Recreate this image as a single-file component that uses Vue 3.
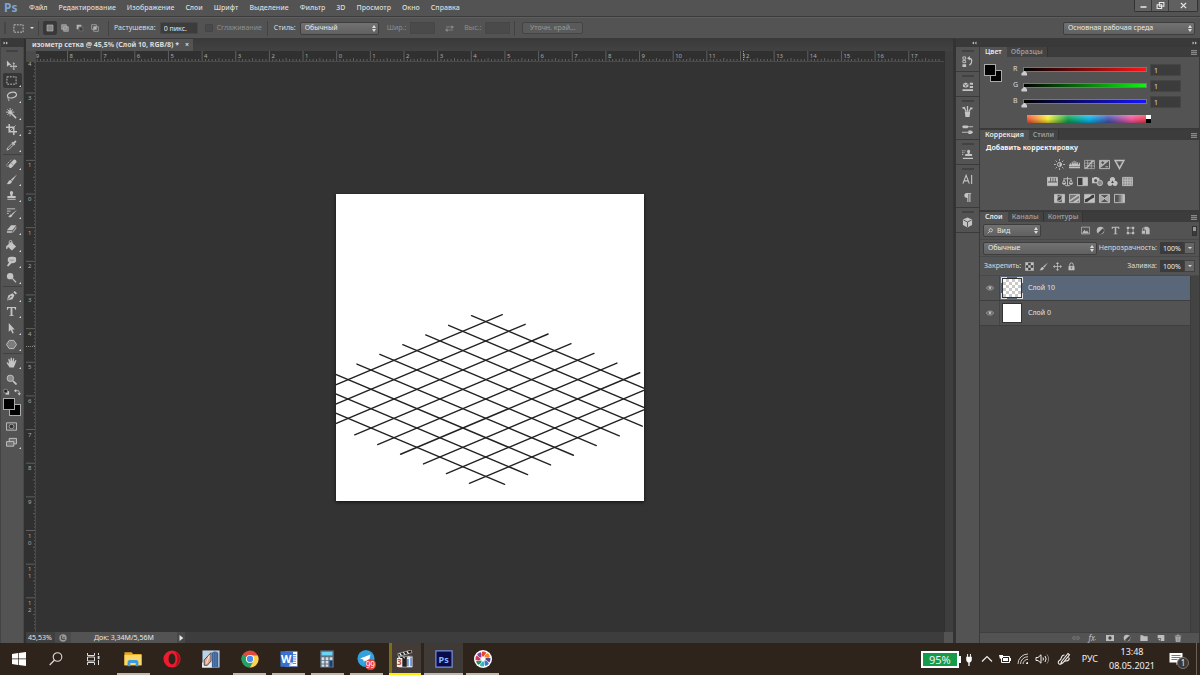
<script setup>
import { ref } from 'vue'

const menu = ['Файл', 'Редактирование', 'Изображение', 'Слои', 'Шрифт', 'Выделение', 'Фильтр', '3D', 'Просмотр', 'Окно', 'Справка']

const icons = {
  move: '<path d="M1 1.500v7l2-1.600h3z"/><path d="M8.500 4.500v7M5 8h7" stroke="currentColor"/><path d="M8.500 3.500l1.500 1.700H7zM8.500 12L7 10.500h3zM4.300 8L6 6.500v3zM12 8l-1.500-1.500v3z"/>',
  marquee: '<path d="M1 2h10v8H1z" fill="none" stroke="currentColor" stroke-dasharray="2 1.200"/>',
  lasso: '<ellipse cx="6.500" cy="4.500" rx="5" ry="3" transform="rotate(-12 6.500 4.500)" fill="none" stroke="currentColor" stroke-width="1.300"/><path d="M2.500 6.500c-2 1.500 1.500 2 .5 4.500" fill="none" stroke="currentColor"/>',
  wand: '<path d="M4.500 4.500l6.500 6.500" stroke="currentColor" stroke-width="1.700"/><path d="M4.500 0v3M4.500 6v3M0 4.500h3M6 4.500h3M1.500 1.500l2 2M7.500 1.500l-2 2M1.500 7.500l2-2" stroke="currentColor"/><circle cx="4.500" cy="4.500" r="2"/>',
  crop: '<path d="M3.500 0v8.500H12M0 3.500h8.500V12" fill="none" stroke="currentColor" stroke-width="1.600"/><path d="M3 9l7.500-7.500" stroke="currentColor" stroke-width=".8"/>',
  dropper: '<path d="M1 11l1-2.500 4.500-4.500 1.500 1.500L3.500 10z" fill="none" stroke="currentColor"/><path d="M6 3l1-1 .8.800L9.500 1c1-1 2.500.500 1.500 1.500L9.200 4.200l.8.800-1 1z"/>',
  heal: '<path d="M1.500 9.500a2.300 2.300 0 0 1 0-3.300l4.500-4.500" fill="none" stroke="currentColor" stroke-dasharray="1.400 1"/><path d="M3 7.500L8.200 2a2.200 2.200 0 0 1 3 3L6 10.500a2.200 2.200 0 0 1-3-3z"/><path d="M5.700 5.500l2 2" stroke="#535353" stroke-dasharray=".8 .6"/>',
  brush: '<path d="M12 .5L5.500 6l1.400 1.500z"/><path d="M5 6.500L6.500 8c0 2.500-3 3.500-6 3 2-.8 1.500-4 4.500-4.500z"/>',
  stamp: '<path d="M4.200 3a1.800 1.800 0 1 1 3.600 0c0 1.500-.8 1.500-.8 3.500h3.500v2.500h-9V6.500H5C5 4.500 4.200 4.500 4.200 3zM1.500 10h9v1h-9z"/>',
  history: '<path d="M12 3L6 7.500l1.200 1.300zM5.700 7.800L7 9c-.5 2-2.500 2.500-5 2 1.800-.8 1.500-2.700 3.700-3.200z"/><path d="M1 4.500h4M1 7h2M1 2h9" stroke="currentColor"/>',
  eraser: '<path d="M5.500 2.500h5.800L7 8H1z"/><path d="M1 8.600h6v2.400H1zM7.700 8.500l3.600-5v2.600L7.700 10.700z" opacity=".75"/>',
  bucket: '<path d="M5.500 2L11 7l-4.500 4.500L1 6.500z"/><path d="M3.500 5V2a1.500 1.500 0 0 1 3 0v3" fill="none" stroke="currentColor"/><path d="M1.500 5.500C-.5 7 0 10 .8 10s1.200-2 1.400-3z"/>',
  smudge: '<path d="M2 2.500C3.500.500 9 .5 11 2v4L9 7.500 6 8l-3.500 3.500C1 11.500 1 10 2 9l1.500-2.500L2 6z"/><path d="M4 4.500h5" stroke="#777" stroke-width=".7"/>',
  dodge: '<circle cx="4.500" cy="4.500" r="3.500"/><path d="M7 7l4 4.300" stroke="currentColor" stroke-width="1.400"/>',
  pen: '<path d="M1 11.500L2.500 6 7 3.500l2.200 2.200L7 10z"/><path d="M8 2.500L9.500 1 12 3.500 10.500 5z"/><path d="M1.500 11l3.500-3.500" stroke="#535353"/><circle cx="5.300" cy="7.200" r=".9" fill="#535353"/>',
  type: '<path d="M1 1h10v3h-1c-.2-1.300-.6-1.800-2-1.800H7V10l1.500.4V11h-5v-.6L5 10V2.200H4C2.600 2.200 2.200 2.700 2 4H1z"/>',
  arrow: '<path d="M3 0l6.500 7H6.800l1.700 3.800-1.500.7L5.300 7.700 3 9.500z"/>',
  shape: '<path d="M3.500 1.500h5L11.500 6l-3 4.500h-5L.5 6z" fill="#7c7c7c" stroke="currentColor"/>',
  hand: '<path d="M4 11.500L1 7c-.7-1.500.7-1.800 1.500-.8L3.500 7.500 2.500 2.700c0-1.200 1.200-1.200 1.500 0L4.800 5 5 1.200c.1-1 1.300-1 1.500 0L6.700 5l1-3.200c.4-1 1.500-.6 1.300.4L8.500 5.700l1.500-2c.7-.8 1.600-.1 1.200.8L9.500 9l-1 2.500z"/>',
  zoom: '<circle cx="4.700" cy="4.700" r="3.500" fill="#8b8b8b" stroke="currentColor"/><path d="M7.500 7.500l4 4" stroke="currentColor" stroke-width="1.800"/>',
  mask: '<path d="M.5 2h11v8H.5z" fill="none" stroke="currentColor"/><circle cx="6" cy="6" r="2.500" fill="#333" stroke="currentColor" stroke-width=".7"/>',
  screen: '<path d="M3.500 1.500h8v6h-8z" fill="#707070" stroke="currentColor"/><path d="M.5 5h8v5h-8z" fill="#707070" stroke="currentColor"/>',
  histpanel: '<path d="M1 1h3v2.500H1zM1 4.800h3v2.500H1z" fill="none" stroke="currentColor"/><path d="M.5 9h4v3h-4z"/><path d="M6.500 2.500h1.500c3.500 0 3.500 5.500 0 7.500" fill="none" stroke="currentColor" stroke-width="1.300"/><path d="M5.500 2.500L8.500 0v5z"/>',
  props: '<path d="M1 3.200L4 1.500l3 1.700V6L4 7.700 1 6z"/><path d="M4 4.500v3M1.500 3.500L4 4.700l2.500-1.200" stroke="#535353" stroke-width=".7" fill="none"/><path d="M8.500 2H12v2H8.500zM8.500 5.500H12v2H8.500zM.5 9H12v2H.5z"/>',
  brushes: '<path d="M3 6h6l-.8 6H3.800z"/><path d="M4.500 6L2 1M6 6V0M7.500 6L10 2" stroke="currentColor" stroke-width="1.400"/><path d="M.5 1h3v2h-3zM9 1.500h2.500v2H9z"/>',
  presets: '<path d="M0 3h12M0 9h12" stroke="currentColor"/><path d="M1 1.500h5l1 1.500-1 1.500H1zM7 7h3l2 2-2 2H7z"/>',
  clone: '<path d="M5.500 2.500a1.700 1.700 0 1 1 3.400 0c0 1.400-.7 1.400-.7 3H11v2.200H3.500V5.500h2.700c0-1.600-.7-1.600-.7-3zM1 9.500h11V11H1z"/><path d="M0 2h4M0 4h3M0 6h2" stroke="currentColor" stroke-dasharray="1 .7"/>',
  char: '<path d="M1 10.500L4.500 1.500 8 10.500M2.200 7.500h4.600M10.500 1v10" fill="none" stroke="currentColor" stroke-width="1.200"/>',
  para: '<path d="M5.500 1H10v1H9.200v9H8V2H7v9H5.800V6.500C1.500 6.500 1.500 1 5.500 1z"/>',
  cube: '<path d="M6 .5l5 2.300v6L6 11.500l-5-2.700v-6z"/><path d="M6 5.500V11M1.500 3.200L6 5.500l4.500-2.300" stroke="#535353" fill="none"/>',
  sun: '<circle cx="6" cy="6" r="2.300" fill="none" stroke="currentColor"/><path d="M6 3.700a2.300 2.300 0 0 1 0 4.600z"/><path d="M6 0v2M6 10v2M0 6h2M10 6h2M1.800 1.800l1.400 1.400M8.800 8.800l1.400 1.400M10.200 1.800L8.800 3.200M3.200 8.800l-1.400 1.400" stroke="currentColor"/>',
  levels: '<path d="M0 8.500h12V10H0zM0 8V6h1V4.500h1V6h1V3h1v2h1V2h1v3h1V2.500h1V5h1V3.500h1V6h1V4h1v4z"/>',
  curves: '<path d="M.5 1.500h11v9H.5zM4 1.500v9M8 1.500v9M.5 4.500h11M.5 7.500h11" fill="none" stroke="currentColor" stroke-width=".7"/><path d="M1 10c5 0 5-8 10-8" fill="none" stroke="currentColor" stroke-width="1.300"/>',
  expo: '<path d="M.5 1.500h11v9H.5z" fill="none" stroke="currentColor"/><path d="M1 2h10L1 10z" opacity=".85"/><path d="M2.500 4h3M4 2.500v3" stroke="#444"/><path d="M7 8.500h3" stroke="currentColor"/>',
  vib: '<path d="M1 1.500h10L6 10.500z" fill="#777" stroke="currentColor" stroke-width="1.400"/><path d="M4 3.500h4L6 7.500z" fill="#4a4a4a"/>',
  hue: '<path d="M.5 1.500h11v9H.5z" fill="none" stroke="currentColor"/><path d="M1 2h2.500v4H1zM4.500 2H6v4H4.500zM7 2h1.500v4H7zM9.500 2H11v4H9.500zM1 7h10v3H1z"/>',
  balance: '<path d="M6 1v9M1.500 3h9M3.500 10.500h5M.5 8l1.700-4L4 8M8 8l1.800-4L11.500 8" fill="none" stroke="currentColor"/><path d="M0 7.500h4.500L3.500 9.500h-2zM7.500 7.500H12l-1 2H8.500z"/>',
  bw: '<path d="M.5 1.500h11v9H.5z" fill="#3c3c3c" stroke="currentColor"/><path d="M6 2h5v8H6z"/>',
  photo: '<path d="M0 2h2l.5-1h3L6 2h2v6H0z"/><circle cx="4" cy="5" r="1.700" fill="#535353"/><circle cx="8.500" cy="7.500" r="3" fill="#888" stroke="currentColor"/>',
  mixer: '<circle cx="6" cy="3.800" r="2.800"/><circle cx="3.300" cy="8" r="2.800"/><circle cx="8.700" cy="8" r="2.800"/><path d="M6 5l1.500 2.500h-3z" fill="#444"/>',
  table: '<path d="M.5 1.500h11v9H.5z" fill="#8f8f8f"/><path d="M.5 1.500h11v9H.5zM3.500 1.500v9M6.200 1.500v9M8.900 1.500v9M.5 4.500h11M.5 7.500h11" fill="none" stroke="currentColor" stroke-width=".9"/>',
  invert: '<path d="M.5 1.500h11v9H.5z" fill="none" stroke="currentColor"/><path d="M1 2h3v8H1zM8.500 2H11v8H8.500z"/><path d="M3 9c0-5 3-6 6-6 0 4-2 6-6 6z" fill="#444" stroke="currentColor"/>',
  poster: '<path d="M.5 1.500h11v9H.5z" fill="#777" stroke="currentColor"/><path d="M1 7.500L9 2h2v.800L1 9.500zM4 10l7-4.500V8l-3 2z"/>',
  thresh: '<path d="M.5 1.500h11v9H.5z" fill="#3a3a3a" stroke="currentColor"/><path d="M1 2h8L6 4.500 1 7zM11 5v5H3l4-3z"/>',
  selcol: '<path d="M.5 1.500h11v9H.5z" fill="#555" stroke="currentColor"/><path d="M1 2l5 4-5 4zM11 2L6 6l5 4z" opacity=".75"/><path d="M1 2l10 8M11 2L1 10" stroke="currentColor"/>',
  gradmap: '<path d="M.5 1.500h11v9H.5z" fill="#555" stroke="currentColor"/><path d="M5 2h2v8H5z" fill="#777"/><path d="M7 2h2v8H7z" fill="#999"/><path d="M9 2h2v8H9z"/>',
  picture: '<path d="M.5 1.500h11v9H.5z" fill="none" stroke="currentColor"/><path d="M1.500 9.500L4.500 5l2 2.500L8 6l2.500 3.500z"/>',
  adjust: '<circle cx="6" cy="6" r="5"/><path d="M2.500 9.500A5 5 0 0 0 9.500 2.500z" fill="#484848"/>',
  frame: '<path d="M2.500 2.500h7v7h-7z" fill="none" stroke="currentColor"/><path d="M1 1h3v3H1zM8 1h3v3H8zM1 8h3v3H1zM8 8h3v3H8z"/>',
  smart: '<path d="M4.500 1H9l2.500 2.500V11h-7z"/><path d="M.5 5.500H6V11H.5z" stroke="#535353"/><path d="M2 5.500V4a1.300 1.300 0 0 1 2.600 0" fill="none" stroke="currentColor"/>',
  checker: '<path d="M.5.500h11v11H.5z" fill="#3c3c3c" stroke="currentColor"/><path d="M1 1h3.300v3.300H1zM7.600 1H11v3.300H7.600zM4.300 4.300h3.300v3.300H4.300zM1 7.600h3.300V11H1zM7.600 7.600H11V11H7.600z"/>',
  four: '<path d="M6 2v8M2 6h8" stroke="currentColor"/><path d="M6 0l2 2.500H4zM6 12l-2-2.500h4zM0 6l2.500-2v4zM12 6L9.500 4v4z"/>',
  lock: '<path d="M2 5.500h8V11H2z"/><path d="M3.700 5.500V3.500a2.300 2.300 0 0 1 4.600 0v2" fill="none" stroke="currentColor" stroke-width="1.300"/><circle cx="6" cy="8" r="1" fill="#535353"/>',
  eye: '<path d="M.5 6C3 2 9 2 11.500 6 9 10 3 10 .5 6z" fill="none" stroke="currentColor"/><circle cx="6" cy="5.800" r="2.200"/>',
  link: '<path d="M5 4H3a2 2 0 0 0 0 4h2M7 4h2a2 2 0 0 1 0 4H7M3.500 6h5" fill="none" stroke="#888"/>',
  addmask: '<path d="M0 1.500h12v9H0z"/><circle cx="6" cy="6" r="2.500" fill="#444"/>',
  folder: '<path d="M.5 2h4l1 1.500h6v7H.5z"/>',
  page: '<path d="M1 1.500h10v9H6V6.500H1z"/><path d="M1.500 7.500H5V11z"/>',
  trash: '<path d="M1 3h10M4.500 3V1.500h3V3" fill="none" stroke="currentColor"/><path d="M2 4h8l-.7 7.500H2.700z"/><path d="M4.500 5v5.500M6 5v5.500M7.500 5v5.500" stroke="#555" stroke-width=".6"/>',
  newsel: '<path d="M1.500 1.500h9v9h-9z" fill="#858585" stroke="currentColor"/>',
  addsel: '<path d="M1 1h7v7H1zM4 4h7v7H4z" fill="#8a8a8a" stroke="currentColor"/>',
  subsel: '<path d="M1 1h7v3H4v4H1z"/><path d="M4.500 4.500h6v6h-6z" fill="#404040" stroke="#777"/>',
  intsel: '<path d="M1 1h7v7H1zM4 4h7v7H4z" fill="none" stroke="currentColor"/><path d="M4 4h4v4H4z"/>',
  swap: '<path d="M1 4h8M3 8h8" stroke="currentColor"/><path d="M8.500 1.500L12 4 8.500 6.500zM3.500 5.500L0 8l3.500 2.500z"/>',
  bridge: '<circle cx="6" cy="6" r="5.500" fill="#999"/><path d="M4 2.500v5.500h5M6.500 5.500h2" fill="none" stroke="#3a3a3a" stroke-width="1.400"/>'
}

const toolGroups = [
  ['move', 'marquee', 'lasso', 'wand', 'crop', 'dropper'],
  ['heal', 'brush', 'stamp', 'history', 'eraser', 'bucket', 'smudge', 'dodge'],
  ['pen', 'type', 'arrow', 'shape'],
  ['hand', 'zoom']
]
const dock = [['histpanel'], ['props'], ['brushes', 'presets'], ['clone'], ['char', 'para'], ['cube']]
const adjustments = [
  ['sun', 'levels', 'curves', 'expo', 'vib'],
  ['hue', 'balance', 'bw', 'photo', 'mixer', 'table'],
  ['invert', 'poster', 'thresh', 'selcol', 'gradmap']
]

const UNIT = 33.65
const hMajor = Array.from({ length: 27 }, (_, i) => ({ pos: 300.7 + (i - 9) * UNIT, label: String(Math.abs(i - 9)) }))
const vMajor = Array.from({ length: 17 }, (_, i) => ({ pos: 132 + (i - 4) * UNIT, chars: String(Math.abs(i - 4)).split('') }))
const sub = [1, 2, 3, 4, 5, 6, 7, 8, 9]
const minorH = hMajor.map(m => sub.map(s => `M${(m.pos + s * UNIT / 10).toFixed(1)} 11v-${s === 5 ? 4 : 3}`).join('')).join('')
const minorV = vMajor.map(m => sub.map(s => `M11 ${(m.pos + s * UNIT / 10).toFixed(1)}h-${s === 5 ? 4 : 3}`).join('')).join('')

const gridLines = Array.from({ length: 9 }, (_, k) => {
  const dx = 23 * k
  const dy = 9.72 * k
  return [
    [135.5 - dx, 122 + dy, 352.7 - dx, 213.5 + dy],
    [-50.7 + dx, 212.5 + dy, 166.3 + dx, 121 + dy]
  ]
}).flat()

const channels = ref([
  { name: 'R', value: 1, color: '#ff1414' },
  { name: 'G', value: 1, color: '#0ff514' },
  { name: 'B', value: 1, color: '#1414ff' }
])
const layers = [
  { name: 'Слой 10', active: true },
  { name: 'Слой 0', active: false }
]
const petals = ['#e8452f', '#f08b27', '#5b3f98', '#3a78c2', '#39b0c8', '#2f8f5b', '#d8345a', '#8b3fa0']
</script>

<template>
  <div class="app">
    <header class="menubar">
      <span class="logo">Ps</span>
      <nav class="menu"><button v-for="m in menu" :key="m">{{ m }}</button></nav>
      <div class="wincontrols">
        <button aria-label="Свернуть"><svg viewBox="0 0 12 12"><path d="M2 7h8v2H2z" /></svg></button>
        <button aria-label="Окно"><svg viewBox="0 0 12 12"><path d="M4.500 2h6v5h-6zM1.500 5h6v5h-6z" fill="none" stroke="currentColor" stroke-width="1.500" /></svg></button>
        <button class="close" aria-label="Закрыть"><svg viewBox="0 0 12 12"><path d="M2.500 2.500l7 7M9.500 2.500l-7 7" stroke="currentColor" stroke-width="1.700" /></svg></button>
      </div>
    </header>

    <section class="options">
      <i class="grip-v"></i>
      <button class="preset" aria-label="Прямоугольная область">
        <svg class="ic12" viewBox="0 0 12 12" v-html="icons.marquee"></svg>
        <i class="caret"></i>
      </button>
      <i class="sep"></i>
      <div class="modes">
        <button v-for="(n, i) in ['newsel', 'addsel', 'subsel', 'intsel']" :key="n" :class="{ on: i === 0 }" :aria-label="n">
          <svg viewBox="0 0 12 12" v-html="icons[n]"></svg>
        </button>
      </div>
      <i class="sep"></i>
      <label class="field feather">Растушевка:<input type="text" value="0 пикс."></label>
      <label class="check dim"><input type="checkbox" disabled>Сглаживание</label>
      <i class="sep"></i>
      <label class="field">Стиль:<span class="sel style"><select><option>Обычный</option></select></span></label>
      <label class="field dim size">Шир.:<input type="text" disabled></label>
      <button class="swap dim" aria-label="Поменять"><svg viewBox="0 0 12 12" v-html="icons.swap"></svg></button>
      <label class="field dim size">Выс.:<input type="text" disabled></label>
      <i class="sep"></i>
      <button class="refine">Уточн. край...</button>
      <span class="sel workspace"><select aria-label="Рабочая среда"><option>Основная рабочая среда</option></select></span>
    </section>

    <main class="work">
      <aside class="tools">
        <div class="strip"><svg viewBox="0 0 12 8"><path d="M1 1l4 3-4 3zM6 1l4 3-4 3z" /></svg></div>
        <div class="toolbox">
          <i class="grip"></i>
          <div v-for="(g, gi) in toolGroups" :key="gi" class="tgroup" :class="'g' + gi">
            <button v-for="t in g" :key="t" :class="{ on: t === 'marquee', corner: t !== 'move' && t !== 'zoom' }" :aria-label="t">
              <svg viewBox="0 0 12 12" v-html="icons[t]"></svg>
            </button>
          </div>
          <div class="minis">
            <svg viewBox="0 0 8 8"><path d="M3 3h4v4H3z" fill="#ccc" /><path d="M1 1h4v4H1z" fill="#222" stroke="#aaa" stroke-width=".7" /></svg>
            <svg viewBox="0 0 8 8"><path d="M2 2.500h2c2 0 2 1 2 3" fill="none" stroke="#ccc" /><path d="M0 2.500L2.500.500v4zM6 8L4 5.500h4z" fill="#ccc" /></svg>
          </div>
          <div class="swatches"><i class="back"></i><i class="front"></i></div>
          <button class="lone" aria-label="Маска"><svg viewBox="0 0 12 12" v-html="icons.mask"></svg></button>
          <button class="lone corner" aria-label="Экран"><svg viewBox="0 0 12 12" v-html="icons.screen"></svg></button>
        </div>
      </aside>

      <section class="doc">
        <div class="doctabs">
          <div class="doctab"><span>изометр сетка @ 45,5% (Слой 10, RGB/8) *</span><button aria-label="Закрыть документ">×</button></div>
        </div>
        <div class="stage">
          <div class="rcorner"></div>
          <svg class="hruler">
            <path :d="minorH" stroke="#606060" />
            <g v-for="(m, i) in hMajor" :key="i">
              <line :x1="m.pos" :x2="m.pos" y1="0" y2="11" stroke="#5f5f5f" />
              <text :x="m.pos + 2" y="7">{{ m.label }}</text>
            </g>
            <path d="M707.500 0v11" stroke="#a8a46c" stroke-dasharray="1 1" />
          </svg>
          <div class="vtrack"></div>
          <svg class="vruler">
            <path :d="minorV" stroke="#606060" />
            <g v-for="(m, i) in vMajor" :key="i">
              <line :y1="m.pos" :y2="m.pos" x1="0" x2="11" stroke="#5f5f5f" />
              <text v-for="(c, ci) in m.chars" :key="ci" x="2" :y="m.pos + 7 + ci * 7">{{ c }}</text>
            </g>
            <path d="M0 284.500h11" stroke="#8e8e82" stroke-dasharray="1 1" />
          </svg>
          <div class="canvas">
            <svg class="paper" viewBox="0 0 308 308">
              <line v-for="(l, i) in gridLines" :key="i" :x1="l[0]" :y1="l[1]" :x2="l[2]" :y2="l[3]" />
            </svg>
          </div>
          <div class="vscroll"></div>
          <div class="status">
            <span class="pct">45,53%</span>
            <span class="bridge"><svg viewBox="0 0 12 12" v-html="icons.bridge"></svg></span>
            <span class="docsize">Док: 3,34M/5,56M</span>
            <button aria-label="Сведения"><svg viewBox="0 0 8 8"><path d="M2 0l5 4-5 4z" /></svg></button>
            <div class="hscroll"></div>
            <div class="scorner"></div>
          </div>
        </div>
      </section>

      <aside class="dock">
        <div class="strip right"><svg viewBox="0 0 12 8"><path d="M6 1L2 4l4 3zM11 1L7 4l4 3z" /></svg></div>
        <div v-for="(g, gi) in dock" :key="gi" class="dgroup">
          <i class="grip"></i>
          <button v-for="d in g" :key="d" :aria-label="d"><svg viewBox="0 0 12 12" v-html="icons[d]"></svg></button>
        </div>
      </aside>

      <aside class="panels">
        <div class="strip right"><svg viewBox="0 0 12 8"><path d="M1 1l4 3-4 3zM6 1l4 3-4 3z" /></svg></div>

        <section class="panel color">
          <div class="tabs"><button class="on">Цвет</button><button>Образцы</button><i class="pmenu"></i></div>
          <div class="colorbody">
            <div class="swatches small"><i class="back"></i><i class="front"></i></div>
            <div class="sliders">
              <label v-for="c in channels" :key="c.name" class="chan">
                <span>{{ c.name }}</span>
                <input v-model.number="c.value" type="range" min="0" max="255" :style="{ '--c': c.color }">
                <input v-model.number="c.value" type="text" :aria-label="c.name">
              </label>
              <div class="spectrum"><i></i></div>
            </div>
          </div>
        </section>

        <section class="panel adj">
          <div class="tabs"><button class="on">Коррекция</button><button>Стили</button><i class="pmenu"></i></div>
          <h3>Добавить корректировку</h3>
          <div v-for="(r, ri) in adjustments" :key="ri" class="adjrow">
            <button v-for="a in r" :key="a" :aria-label="a"><svg viewBox="0 0 12 12" v-html="icons[a]"></svg></button>
          </div>
        </section>

        <section class="panel layers">
          <div class="tabs"><button class="on">Слои</button><button>Каналы</button><button>Контуры</button><i class="pmenu"></i></div>
          <div class="lrow filter">
            <span class="sel kind">
              <svg viewBox="0 0 8 8"><circle cx="5" cy="3" r="2.200" fill="none" stroke="currentColor" /><path d="M3.300 4.700L.8 7.200" stroke="currentColor" /></svg>
              <select aria-label="Фильтр слоев"><option>Вид</option></select>
            </span>
            <div class="ficons">
              <button v-for="n in ['picture', 'adjust', 'type', 'frame', 'smart']" :key="n" :aria-label="n"><svg viewBox="0 0 12 12" v-html="icons[n]"></svg></button>
            </div>
            <i class="toggle"></i>
          </div>
          <div class="lrow">
            <span class="sel blend"><select aria-label="Режим наложения"><option>Обычные</option></select></span>
            <label class="num">Непрозрачность:<input type="text" value="100%"></label>
            <button class="drop" aria-label="Непрозрачность"><i class="caret"></i></button>
          </div>
          <div class="lrow lockrow">
            <span>Закрепить:</span>
            <div class="locks">
              <button v-for="n in ['checker', 'brush', 'four', 'lock']" :key="n" :aria-label="n"><svg viewBox="0 0 12 12" v-html="icons[n]"></svg></button>
            </div>
            <label class="num">Заливка:<input type="text" value="100%"></label>
            <button class="drop" aria-label="Заливка"><i class="caret"></i></button>
          </div>
          <div class="list">
            <div class="items">
              <div v-for="l in layers" :key="l.name" class="layer" :class="{ active: l.active }">
                <button class="eye" aria-label="Видимость"><svg viewBox="0 0 12 12" v-html="icons.eye"></svg></button>
                <div class="thumbwrap"><i class="thumb"></i></div>
                <span>{{ l.name }}</span>
              </div>
            </div>
            <div class="lscroll"></div>
          </div>
          <div class="lfoot">
            <button aria-label="Связать"><svg viewBox="0 0 12 12" v-html="icons.link"></svg></button>
            <button class="fx">fx<small>.</small></button>
            <button v-for="n in ['addmask', 'adjust', 'folder', 'page', 'trash']" :key="n" :aria-label="n"><svg viewBox="0 0 12 12" v-html="icons[n]"></svg></button>
          </div>
        </section>
      </aside>
    </main>

    <footer class="taskbar">
      <div class="system">
        <button aria-label="Пуск"><svg class="i14" viewBox="0 0 14 14"><path d="M0 2l6-1v5.600H0zM6.700.900L14 0v6.600H6.700zM0 7.300h6v5.600l-6-.9zM6.700 7.300H14V14l-7.300-1z" fill="#fff" /></svg></button>
        <button aria-label="Поиск"><svg class="i14" viewBox="0 0 14 14"><circle cx="8.500" cy="5" r="4.300" fill="none" stroke="#ddd" stroke-width="1.100" /><path d="M5.500 8L.7 13" stroke="#ddd" stroke-width="1.200" /></svg></button>
        <button aria-label="Представление задач"><svg class="i14" viewBox="0 0 14 14"><path d="M1.500 1v2.500h7V1M1.500 13v-2.500h7V13M1.500 5h7v4h-7z" fill="none" stroke="#ddd" /><path d="M12.500 1v2M12.500 8v5" stroke="#ddd" /><path d="M11.700 4h1.800v3h-1.800z" fill="#ddd" /></svg></button>
      </div>
      <div class="apps">
        <button class="run" aria-label="Проводник"><svg viewBox="0 0 20 20"><path d="M.5 2.500h8l1.500 2h9.500V17H.5z" fill="#e9a821" /><path d="M.5 5.500h19V17H.5z" fill="#fcd667" /><path d="M4 18v-5l1.500-1.800h9L16 13v5h-3v-3.500H7V18z" fill="#3c9ae0" /></svg></button>
        <button aria-label="Opera"><svg viewBox="0 0 20 20"><path fill-rule="evenodd" d="M10 .5a9.500 9.500 0 1 0 0 19 9.500 9.500 0 0 0 0-19zm0 3.500c2.300 0 3.800 2.600 3.800 6s-1.500 6-3.800 6-3.800-2.600-3.800-6 1.500-6 3.800-6z" fill="#ee1c2e" /><path d="M13 2c4 2 6 5 6 8s-2 6.500-6 8c2-2 3-5 3-8s-1-6-3-8z" fill="#a90f1d" /></svg></button>
        <button aria-label="Архитектура"><svg viewBox="0 0 20 20"><path d="M.5.500h19v19H.5z" fill="#b9d4e6" /><path d="M0 14h11v5.500H0z" fill="#e6ebee" /><path d="M2.500 17v-6L10 3v9l-4 5z" fill="#e8a98f" stroke="#384550" /><path d="M5 15l3-9" stroke="#fff" stroke-width=".8" /><path d="M11 19V4c0-3 7-3 7 0v15z" fill="#3b5f94" /><path d="M13 3v16M15.500 2v17" stroke="#6a8dbb" stroke-width=".8" /></svg></button>
        <button class="run" aria-label="Chrome"><svg viewBox="0 0 20 20"><circle cx="10" cy="10" r="9.500" fill="#dd4b3e" /><path d="M10 10L1.800 5.300A9.500 9.500 0 0 0 10 19.500l4-7.500z" fill="#1fa463" /><path d="M10 6h8.600A9.500 9.500 0 0 1 10 19.500l4-7.500z" fill="#fdd34b" /><circle cx="10" cy="10" r="4.500" fill="#fff" /><circle cx="10" cy="10" r="3.500" fill="#4a8af4" /></svg></button>
        <button class="run" aria-label="Word"><svg viewBox="0 0 20 20"><path d="M6 1.500h13.500v17H6z" fill="#fff" stroke="#2b5cba" stroke-width=".7" /><path d="M14 5h4M14 7.500h4M14 10h4M14 12.500h4M14 15h4" stroke="#4f83d6" /><path d="M.5 1.500h14v12L10 18.500H.5z" fill="#3a70cf" /><path d="M10 18.500l1-4.500 3.500-.5z" fill="#d5e3f8" /><text x="1" y="14" font-size="12" font-weight="700" fill="#fff">W</text></svg></button>
        <button class="run" aria-label="Калькулятор"><svg viewBox="0 0 20 20"><path d="M2.500.500h15v19h-15z" fill="#607383" /><path d="M4 2h12v4H4z" fill="#68d5f4" /><path d="M4 8h3v3H4zM8.500 8h3v3h-3zM13 8h3v3h-3zM4 12h3v3H4zM8.500 12h3v3h-3zM4 16h3v2.500H4zM8.500 16h3v2.500h-3z" fill="#d5dee4" /><path d="M13 12h3v6.500h-3z" fill="#173f7c" /></svg></button>
        <button class="run" aria-label="Telegram"><svg viewBox="0 0 20 20"><circle cx="10" cy="9.500" r="9.500" fill="#32a1dc" /><path d="M3.500 9.500L15 5l-2 9.500-4-2.800L7.500 13 7 10.500z" fill="#fff" /></svg><b class="badge99">99</b></button>
        <button class="alert" aria-label="Видео"><svg viewBox="0 0 20 20"><path d="M2 4l15-4 .7 3L2.800 7z" fill="#161616" stroke="#eee" stroke-width=".6" /><path d="M4 3.500l2 2.500M8 2.500l2 2.500M12 1.500l2 2.500" stroke="#fff" stroke-width="1.300" /><path d="M3 7h15v12H3z" fill="#222" stroke="#ddd" stroke-width=".7" /><path d="M1 9h6v10H1zM12 8h6v11h-6z" fill="#f3f0ea" /><text x="1" y="17" font-size="9" font-weight="700" fill="#c4501c">3</text><path d="M12.500 10H14v8h-1.500zM16 9h1.500v9H16z" fill="#3977df" /><path d="M3 8l2 1M8 8l2 1M13 7.500l3 .5" stroke="#fff" /></svg></button>
        <button class="run current" aria-label="Photoshop"><svg viewBox="0 0 20 20"><path d="M1 1h18v18H1z" fill="#0b0b4a" stroke="#7594e2" stroke-width="1.300" /><text x="4" y="14" font-size="10" font-weight="700" fill="#8bb7ff">Ps</text></svg></button>
        <button class="run" aria-label="Фото"><svg viewBox="0 0 20 20"><circle cx="10" cy="10" r="10" fill="#fff" /><path v-for="(p, i) in petals" :key="p" d="M9.700 7.500C8 6 8 3.500 9.300 1.600c2 0 3.700.600 4.500 1.400L10.300 7.500z" :fill="p" :transform="`rotate(${i * 45} 10 10)`" /></svg></button>
      </div>
      <div class="tray">
        <div class="battery">95%</div>
        <svg class="t1" viewBox="0 0 8 14"><path d="M1 4h6v3c0 2-1 3-2.300 3.200V14H3.300v-3.800C2 10 1 9 1 7zM2 1h1v3H2zM5 1h1v3H5z" fill="#fff" /></svg>
        <svg class="t2" viewBox="0 0 12 12"><path d="M1 8.500L6 3.500l5 5" fill="none" stroke="#eee" stroke-width="1.200" /></svg>
        <svg class="t2" viewBox="0 0 12 12"><path d="M2.500 3.500h8v6h-8z" fill="none" stroke="#fff" /><path d="M4 5h5v3H4zM11 5h1v3h-1zM0 2h4v3H2.500L1 6z" fill="#fff" /></svg>
        <svg class="t2" viewBox="0 0 12 12"><path d="M1 11A10 10 0 0 1 11 1M3.500 11A7.500 7.500 0 0 1 11 3.700M6 11a5 5 0 0 1 5-4.700" fill="none" stroke="#ccc" /><path d="M9 11a2 2 0 0 1 2-2v2z" fill="#fff" /></svg>
        <svg class="t3" viewBox="0 0 14 12"><path d="M1 4.500h2l3-2.700v8.400L3 7.500H1z" fill="none" stroke="#eee" /><path d="M8 4.500a3 3 0 0 1 0 3M10 3a5 5 0 0 1 0 6" fill="none" stroke="#eee" /><path d="M12 1.500a7 7 0 0 1 0 9" fill="none" stroke="#888" /></svg>
        <svg class="t4" viewBox="0 0 14 14"><path d="M4.500 9.500L11 1.500l1.500 1.300-6.500 8-2.200.9zM7.500 3C3.500 3 5 7 3 8c-3 1.500-2 5 1 4 2-.6 2.500-3 5-3 3 0 4-2.500 2.500-3.500" fill="none" stroke="#eee" stroke-width="1.100" /></svg>
        <span class="lang">РУС</span>
        <div class="clock"><span>13:48</span><span>08.05.2021</span></div>
        <button class="notify" aria-label="Уведомления"><svg viewBox="0 0 14 14"><path d="M.5 1h13v9.500H10L7.500 13v-2.500h-7z" fill="#fff" /><path d="M2.500 3.500h9M2.500 5.500h9M2.500 7.500h6" stroke="#555" stroke-width=".8" /></svg><b>1</b></button>
      </div>
    </footer>
  </div>
</template>

<style>
html, body { margin: 0; background: #333; }
</style>

<style scoped>
* { box-sizing: border-box; }
.app {
  display: flex; flex-direction: column; height: 100vh; overflow: hidden;
  font: 7px/10px "Noto Sans", "Open Sans", sans-serif; color: #dcdcdc; background: #535353;
}
button, input, select { font: inherit; color: inherit; border: 0; padding: 0; margin: 0; background: none; border-radius: 0; outline: 0; }
button { display: flex; align-items: center; justify-content: center; }
svg { display: block; fill: currentColor; flex: none; }
i { font-style: normal; flex: none; }

.menubar { display: flex; align-items: center; height: 17px; flex: none; border-bottom: 1px solid #3c3c3c; }
.logo { width: 24px; padding-left: 4px; font-size: 12px; line-height: 16px; font-weight: 700; color: #7ba5d3; }
.menu { display: flex; gap: 11px; padding-left: 5px; font-weight: 500; }
.wincontrols { margin-left: auto; align-self: flex-start; display: flex; margin-right: 2px; border: 1px solid #333; border-top: 0; border-radius: 0 0 2px 2px; }
.wincontrols button { width: 17px; height: 11px; background: #606060; border-right: 1px solid #3a3a3a; color: #e8e8e8; }
.wincontrols .close { width: 28px; border-right: 0; }
.wincontrols svg { width: 9px; height: 9px; }

.options { display: flex; align-items: center; height: 22px; flex: none; border-bottom: 1px solid #3a3a3a; padding-left: 4px; border-top: 1px solid #5e5e5e; }
.grip-v { width: 2px; height: 12px; background: #464646; margin-right: 7px; }
.preset { gap: 6px; color: #c8c8c8; }
.ic12 { width: 11px; height: 11px; }
.caret { width: 0; height: 0; border: 2px solid transparent; border-top-color: #ddd; border-bottom: 0; }
.sep { width: 1px; height: 15px; background: #434343; margin: 0 4px; }
.modes { display: flex; gap: 1px; }
.modes button { width: 14px; height: 14px; color: #b5b5b5; }
.modes .on { background: #383838; border-radius: 2px; }
.modes svg { width: 8px; height: 8px; }
.modes + .sep { margin-left: 6px; margin-right: 5px; }
.field { display: flex; align-items: center; gap: 4px; }
.field input { width: 38px; height: 12px; background: #3c3c3c; padding: 0 3px; border: 1px solid #484848; color: #e8e8e8; }
.dim { color: #8e8e8e; }
.check { display: flex; align-items: center; gap: 4px; margin-left: 7px; }
.check input { appearance: none; width: 8px; height: 8px; background: #494949; border: 1px solid #444; border-radius: 1px; }
.check + .sep { margin-left: 5px; margin-right: 6px; }
.sel { position: relative; display: flex; height: 13px; border: 1px solid #3e3e3e; border-radius: 2px; background: linear-gradient(#727272, #606060); }
.sel select { appearance: none; width: 100%; padding: 0 4px; color: #e8e8e8; }
.sel::before, .sel::after { content: ""; position: absolute; right: 2px; border: 2px solid transparent; pointer-events: none; }
.sel::before { top: 2px; border-top: 0; border-bottom: 3px solid #ddd; }
.sel::after { bottom: 2px; border-bottom: 0; border-top: 3px solid #ddd; }
.style { width: 79px; }
.size { margin-left: 8px; }
.size input { width: 25px; background: #4a4a4a; border-color: #474747; }
.swap { width: 12px; margin-left: 8px; }
.swap svg { width: 9px; height: 9px; }
.swap + .size { margin-left: 9px; }
.refine { width: 61px; height: 12px; margin-left: 3px; border: 1px solid #444; border-radius: 2px; background: #5a5a5a; color: #999; }
.workspace { width: 132px; margin-left: auto; margin-right: 5px; }

.work { flex: 1; min-height: 0; display: flex; background: #3a3a3a; }
.strip { height: 8px; flex: none; display: flex; align-items: center; background: #393939; color: #bbb; }
.strip svg { width: 6px; height: 4px; margin: 0 2px; }
.strip.right { justify-content: flex-end; }
.grip { display: block; width: 12px; height: 2px; background: #424242; }

.tools { width: 26px; flex: none; display: flex; flex-direction: column; border-right: 2px solid #303030; border-left: 1px solid #444; }
.toolbox { flex: 1; background: #535353; display: flex; flex-direction: column; align-items: center; color: #c4c4c4; border-right: 1px solid #484848; }
.toolbox .grip { margin: 3px 0 4px; }
.tgroup { display: flex; flex-direction: column; justify-content: space-around; border-bottom: 1px solid #404040; flex: none; }
.g0 { height: 99px; }
.g1 { height: 132px; }
.g2 { height: 67px; }
.g3 { height: 34px; border: 0; }
.tgroup button, .lone { position: relative; width: 19px; height: 15px; flex: none; }
.tgroup button svg, .lone svg { width: 11px; height: 11px; margin-right: 2px; }
.tgroup .on { background: #373737; border-radius: 2px; }
.corner::after { content: ""; position: absolute; right: 1px; bottom: 1px; border: 1px solid #ddd; border-top-color: transparent; border-left-color: transparent; }
.minis { display: flex; gap: 4px; height: 9px; }
.minis svg { width: 7px; height: 8px; }
.swatches { position: relative; width: 18px; height: 18px; margin: 1px 0 2px; flex: none; }
.swatches i { position: absolute; width: 12px; height: 12px; background: #000; border: 1px solid #aaa; }
.front { left: 0; top: 0; }
.back { right: 0; bottom: 0; }
.lone { margin-top: 1px; }

.doc { flex: 1; min-width: 0; display: flex; flex-direction: column; background: #353535; }
.doctabs { height: 12px; flex: none; background: linear-gradient(#3a3a3a, #424242); }
.doctab { display: inline-flex; height: 12px; align-items: center; gap: 6px; padding: 0 4px 0 6px; background: #535353; font-weight: 700; }
.stage { flex: 1; min-height: 0; display: grid; grid-template: 11px 1fr 11px / 10px 1fr 9px; }
.rcorner { background: #4c4c4c; }
.hruler, .vruler { width: 100%; height: 100%; overflow: hidden; background: #303030; }
.hruler { border-bottom: 1px solid #4a4a4a; }
.vruler { border-right: 1px solid #4a4a4a; }
.hruler text, .vruler text { font-size: 6px; fill: #aaa; }
.vtrack, .vscroll { background: #3e3e3e; border-left: 1px solid #303030; }
.canvas { display: flex; align-items: center; justify-content: center; background: #333; min-height: 0; overflow: hidden; }
.paper { width: 308px; height: 307px; background: #fff; overflow: hidden; box-shadow: 0 1px 3px #111; }
.paper line { stroke: #222; stroke-width: 1.400; stroke-linecap: round; }
.status { grid-column: 1 / -1; display: flex; align-items: stretch; background: #3d3d3d; color: #e6e6e6; }
.status > * { display: flex; align-items: center; }
.pct { width: 29px; padding-left: 2px; background: #404040; }
.bridge { width: 16px; justify-content: center; background: #4a4a4a; }
.bridge svg { width: 8px; height: 8px; }
.docsize { width: 106px; padding-left: 23px; background: #535353; }
.status button { width: 8px; background: #484848; }
.status button svg { width: 6px; height: 6px; }
.hscroll { flex: 1; }
.scorner { width: 9px; background: #535353; }

.dock { width: 26px; flex: none; margin-right: 1px; border-left: 3px solid #333; background: #535353; display: flex; flex-direction: column; }
.dgroup { display: flex; flex-direction: column; align-items: center; border-bottom: 1px solid #3a3a3a; padding: 3px 0 1px; flex: none; }
.dgroup button { width: 20px; height: 18px; color: #c4c4c4; }
.dgroup svg { width: 11px; height: 11px; }

.panels { width: 220px; flex: none; display: flex; flex-direction: column; }
.panel { background: #535353; margin: 0 1px 2px 0; }
.tabs { display: flex; height: 10px; background: #3c3c3c; color: #9a9a9a; font-weight: 600; }
.tabs button { padding: 0 4px; border-right: 1px solid #333; background: #434343; }
.tabs .on { background: #535353; color: #e8e8e8; border: 0; padding: 0 5px; }
.pmenu { margin: 3px 2px 0 auto; width: 6px; height: 5px; background: repeating-linear-gradient(#888 0 1px, #555 1px 2px); }
.color { height: 81px; flex: none; }
.colorbody { display: flex; padding: 7px 17px 0 4px; }
.small { margin: 0; }
.sliders { flex: 1; padding-left: 11px; display: flex; flex-direction: column; }
.chan { display: grid; grid-template-columns: 7px 128px 1fr; height: 16px; gap: 1px; align-items: start; }
.chan input[type=range] { appearance: none; width: 128px; height: 10px; margin: 0; }
.chan input[type=range]::-webkit-slider-runnable-track { height: 5px; margin: 0 2px; background: linear-gradient(90deg, #000, var(--c)); border: 1px solid #777; }
.chan input[type=range]::-webkit-slider-thumb { appearance: none; width: 6px; height: 5px; margin: 3px 0 0 -3px; background: #ccc; clip-path: polygon(50% 0, 100% 60%, 100% 100%, 0 100%, 0 60%); }
.chan input[type=text] { width: 31px; height: 12px; background: #3c3c3c; border: 1px solid #464646; padding: 0 3px; }
.spectrum { width: 124px; height: 8px; margin: 3px 0 0 14px; display: flex; justify-content: flex-end; background: linear-gradient(rgba(255,255,255,.25), transparent 50%, rgba(0,0,0,.3)), linear-gradient(90deg, #f4523e, #f6ee3a 17%, #15a350 33%, #10b5ea 50%, #5058b0 66%, #ef5aa0 84%, #f03c3c); }
.spectrum i { width: 5px; background: linear-gradient(#fff 50%, #000 50%); }

.adj { height: 80px; flex: none; }
.adj h3 { margin: 3px 0 3px 6px; font-size: 7px; line-height: 10px; font-weight: 700; color: #f2f2f2; }
.adjrow { display: flex; justify-content: center; gap: 4px; height: 17px; align-items: center; color: #c2c2c2; }
.adjrow svg { width: 11px; height: 11px; }

.layers { flex: 1; min-height: 0; margin-bottom: 0; display: flex; flex-direction: column; }
.lrow { display: flex; align-items: center; height: 17px; padding: 0 4px 0 3px; flex: none; border-bottom: 1px solid #494949; }
.filter { height: 18px; }
.kind { width: 58px; align-items: center; }
.kind svg { width: 6px; height: 6px; margin-left: 3px; }
.ficons { display: flex; gap: 6px; margin-left: 40px; color: #bbb; }
.ficons svg, .locks svg { width: 9px; height: 9px; }
.toggle { width: 5px; height: 10px; margin-left: auto; margin-right: -2px; border: 1px solid #333; background: linear-gradient(#999 50%, #3a3a3a 50%); }
.blend { width: 114px; }
.num { display: flex; align-items: center; gap: 3px; margin-left: auto; }
.num input { width: 24px; height: 12px; background: #3b3b3b; padding-left: 3px; color: #eee; }
.drop { width: 11px; height: 12px; border: 1px solid #414141; background: #656565; }
.lockrow { height: 19px; padding-left: 4px; }
.locks { display: flex; gap: 5px; margin-left: 4px; color: #c2c2c2; }
.list { flex: 1; min-height: 0; display: flex; background: #484848; }
.items { flex: 1; }
.layer { display: flex; align-items: center; height: 25px; background: #535353; border-bottom: 1px solid #3f3f3f; color: #e0e0e0; }
.layer.active { background: linear-gradient(90deg, #535353 20px, #5a6779 20px); }
.eye { width: 20px; height: 100%; border-right: 1px solid #444; color: #bbb; }
.eye svg { width: 8px; height: 8px; }
.thumbwrap { width: 22px; height: 22px; margin: 0 5px 0 1px; display: grid; place-items: center; }
.active .thumbwrap { background: linear-gradient(#5a6779, #5a6779) 50% 0 / 10px 100% no-repeat, linear-gradient(#5a6779, #5a6779) 0 50% / 100% 10px no-repeat, #ddd; }
.thumb { width: 20px; height: 20px; background: #fff; border: 1px solid #333; }
.active .thumb { background: repeating-conic-gradient(#c9c9c9 0 25%, #fff 0 50%) 0 0 / 6px 6px; }
.lscroll { width: 9px; background: #434343; border-left: 1px solid #3b3b3b; }
.lfoot { height: 11px; flex: none; display: flex; justify-content: flex-end; align-items: center; gap: 6px; padding-right: 16px; border-top: 1px solid #404040; color: #bdbdbd; }
.lfoot button { width: 11px; }
.lfoot svg { width: 8px; height: 8px; }
.fx { font-style: italic; font-size: 8px; }

.taskbar { height: 32px; flex: none; display: flex; background: #2f241b; color: #f0f0f0; }
.system { display: flex; width: 114px; }
.system button { width: 37px; }
.i14 { width: 14px; height: 14px; }
.apps { display: grid; grid-template-columns: repeat(10, 1fr); width: 388px; }
.apps button { position: relative; margin: 0 3px; border-bottom: 2px solid transparent; padding-top: 2px; }
.apps svg { width: 18px; height: 18px; }
.apps .run { border-bottom-color: #bdb8b2; }
.apps .current { margin: 0; background: #403a37; }
.apps .alert { background: linear-gradient(90deg, #7d6f16 3px, #443b36 3px); border-bottom-color: #ffee00; }
.badge99 { position: absolute; left: 15px; top: 16px; width: 11px; height: 11px; border-radius: 50%; background: #e8403a; color: #fff; font: 8px/11px "Noto Sans", sans-serif; text-align: center; }
.tray { margin-left: auto; display: flex; align-items: center; border-right: 1px solid #6b625b; margin-right: 3px; }
.battery { position: relative; width: 38px; height: 17px; border: 2px solid #fff; background: #159c4b; font-size: 11px; line-height: 13px; text-align: center; }
.battery::after { content: ""; position: absolute; right: -4px; top: 3px; width: 2px; height: 7px; background: #fff; }
.t1 { width: 8px; height: 13px; margin: 0 8px 0 6px; }
.t2 { width: 12px; height: 12px; margin-right: 6px; }
.t3 { width: 14px; height: 12px; margin-right: 8px; }
.t4 { width: 14px; height: 14px; margin-right: 11px; }
.lang { font-size: 9px; }
.clock { display: flex; flex-direction: column; align-items: center; font-size: 9px; line-height: 14px; margin-left: 12px; width: 44px; white-space: nowrap; }
.notify { position: relative; width: 20px; margin: 0 10px 0 12px; }
.notify svg { width: 14px; height: 14px; }
.notify b { position: absolute; right: -3px; top: 5px; width: 12px; height: 12px; border-radius: 50%; background: #3c3835; border: 1px solid #777; font: 8px/10px "Noto Sans", sans-serif; text-align: center; }
</style>
